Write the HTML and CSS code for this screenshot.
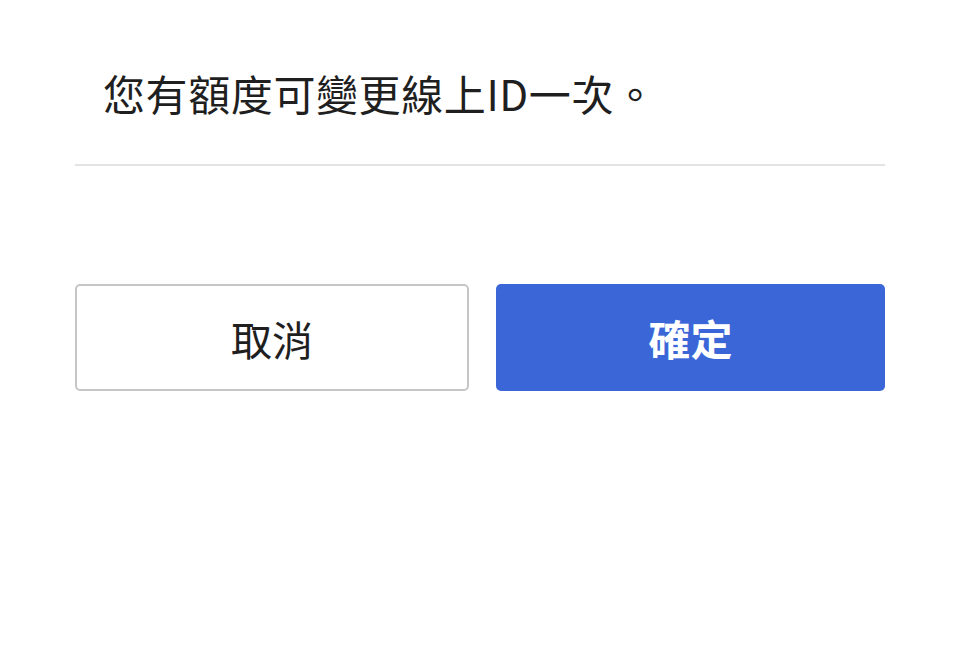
FILE: index.html
```html
<!DOCTYPE html>
<html lang="zh-Hant">
<head>
    <meta charset="UTF-8">
    <meta name="viewport" content="width=device-width, initial-scale=1.0">
    <title>變更線上ID</title>
    <link rel="stylesheet" href="styles.css">
</head>
<body>

    <!-- Dialog -->
    <div class="dialog">
        <p class="message">您有額度可變更線上ID一次。</p>
        <hr class="divider">

        <div class="actions">
            <button class="btn btn-cancel">取消</button>
            <button class="btn btn-confirm">確定</button>
        </div>
    </div>

</body>
</html>
```

FILE: styles.css
```css
body {
    font-family: "Noto Sans CJK TC", "Noto Sans", sans-serif;
    background-color: #fff;
    color: #222;
    margin: 0;
    padding: 0;
}

.dialog {
    width: 810px;
    margin: 0 0 0 75px;
    padding-top: 64px;
}

.message {
    margin: 0;
    padding-left: 28px;
    font-size: 42px;
    line-height: 58px;
    letter-spacing: 0.6px;
    color: #1f1f1f;
}

.divider {
    margin: 42px 0 0;
    border: none;
    height: 2px;
    background-color: #e3e3e3;
}

.actions {
    display: flex;
    gap: 27px;
    margin-top: 118px;
}

.btn {
    height: 107px;
    border-radius: 5px;
    font-family: inherit;
    font-size: 41px;
    cursor: pointer;
}

.btn-cancel {
    width: 394px;
    background-color: #fff;
    border: 2px solid #c6c6c6;
    color: #1f1f1f;
}

.btn-confirm {
    width: 389px;
    background-color: #3a66d7;
    border: none;
    color: #fff;
    font-weight: bold;
    font-size: 42px;
}
```
